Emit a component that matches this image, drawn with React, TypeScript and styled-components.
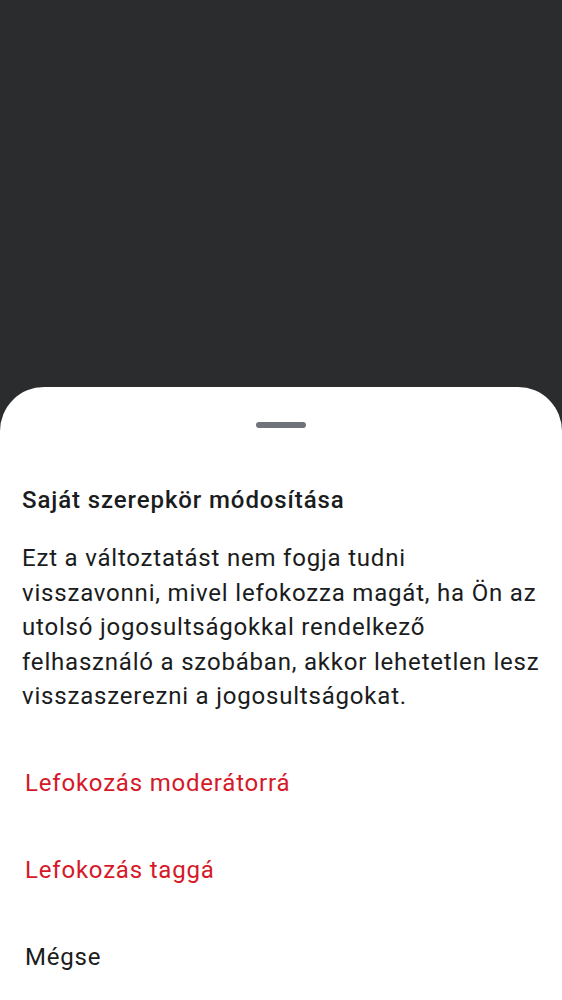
import React from "react";
import styled, { createGlobalStyle } from "styled-components";

const Global = createGlobalStyle`
  html, body { margin: 0; padding: 0; background: #2b2c2e; }
  body { font-family: Roboto, "Noto Sans", sans-serif; -webkit-font-smoothing: antialiased; }
  #root { min-height: 1000px; }
`;

const Screen = styled.div`
  width: 562px;
  height: 1000px;
  background: #2b2c2e;
  display: flex;
  flex-direction: column;
  justify-content: flex-end;
  overflow: hidden;
`;

const Sheet = styled.div`
  background: #ffffff;
  border-radius: 44px 44px 0 0;
  height: 613px;
  display: flex;
  flex-direction: column;
  align-items: stretch;
`;

const HandleRow = styled.div`
  display: flex;
  justify-content: center;
  padding-top: 35px;
`;

const Handle = styled.div`
  width: 50px;
  height: 6px;
  border-radius: 3px;
  background: #6f737a;
`;

const Content = styled.div`
  padding: 57px 22px 0 22px;
`;

const Title = styled.h2`
  margin: 0;
  font-family: Roboto, sans-serif;
  font-weight: 500;
  font-size: 24px;
  letter-spacing: 0.9px;
  line-height: 30px;
  color: #1a1c20;
`;

const Body = styled.p`
  margin: 26px 0 0 0;
  font-family: Roboto, sans-serif;
  font-weight: 400;
  font-size: 24px;
  letter-spacing: 0.8px;
  line-height: 34.5px;
  color: #1a1c20;
`;

const Actions = styled.div`
  display: flex;
  flex-direction: column;
  margin-top: 26px;
`;

const Action = styled.button<{ $danger?: boolean }>`
  appearance: none;
  border: none;
  background: transparent;
  text-align: left;
  padding: 0 25px;
  height: 87px;
  font-family: Roboto, sans-serif;
  font-size: 24px;
  letter-spacing: 0.8px;
  font-weight: 400;
  color: ${(p) => (p.$danger ? "#d51928" : "#1a1c20")};
  cursor: pointer;
`;

export default function App() {
  return (
    <>
      <Global />
      <Screen>
        <Sheet>
          <HandleRow>
            <Handle />
          </HandleRow>
          <Content>
            <Title>Saját szerepkör módosítása</Title>
            <Body>
              Ezt a változtatást nem fogja tudni visszavonni, mivel lefokozza
              magát, ha Ön az utolsó jogosultságokkal rendelkező felhasználó a
              szobában, akkor lehetetlen lesz visszaszerezni a jogosultságokat.
            </Body>
          </Content>
          <Actions>
            <Action $danger>Lefokozás moderátorrá</Action>
            <Action $danger>Lefokozás taggá</Action>
            <Action>Mégse</Action>
          </Actions>
        </Sheet>
      </Screen>
    </>
  );
}
